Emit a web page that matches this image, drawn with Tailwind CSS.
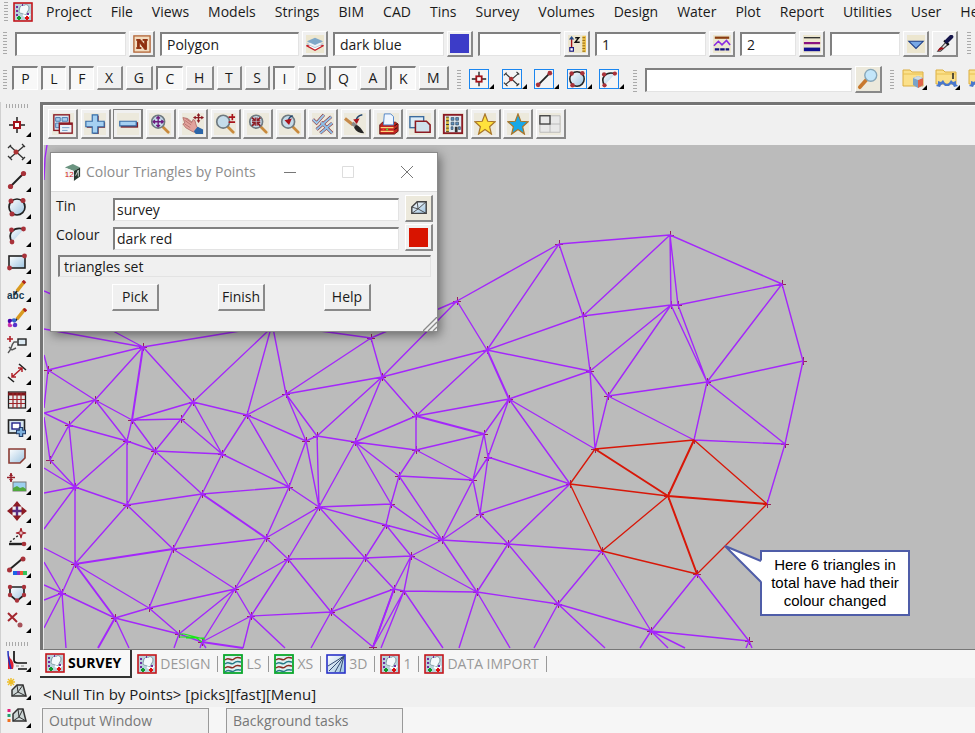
<!DOCTYPE html>
<html lang="en">
<head>
  <meta charset="UTF-8">
  <meta name="viewport" content="width=device-width, initial-scale=1">
  <title>Survey - Colour Triangles by Points</title>
  <script src="https://cdn.jsdelivr.net/npm/@tailwindcss/browser@4"></script>
</head>
<body class="flex h-screen flex-col overflow-hidden bg-[#f0f0f0] font-['Open_Sans','Noto_Sans',sans-serif] text-sm text-[#1a1a1a]">

  <!-- Gradients stay out of the hidden sprite, or they would not paint -->
  <svg class="absolute size-0" aria-hidden="true">
    <linearGradient id="sky" x1="0" y1="0" x2="1" y2="1"><stop offset="0" stop-color="#fff"/><stop offset="1" stop-color="#9cc3e0"/></linearGradient>
  </svg>

  <!-- Icon set -->
  <svg class="hidden">
    <defs>
      <g id="lens"><path d="M15 15l6 6" stroke="#c98a3c" stroke-width="3" stroke-linecap="round"/><circle cx="10" cy="9.500" r="7" fill="#c5dcea" stroke="#6f7a80" stroke-width="1.800"/></g>
    </defs>
    <symbol id="plan" viewBox="0 0 20 20"><rect x="1" y="1" width="18" height="18" fill="#b9d3dc" stroke="#c4161c" stroke-width="1.600"/><path d="M7 5c2-3 4-1 5-2s4 0 4 3-2 3-2 5-3 2-4 1-4 0-4-3z" fill="#f4f9fb" stroke="#7f9aa5"/><path d="M10 13l4 2 3-3" stroke="#fff" stroke-width="2" fill="none"/><path d="M3 5h2M3 9h2M3 13h2M9 3h1M14 12h2" stroke="#7030a0" stroke-width="2"/><path d="M6 14v4M4 16h4" stroke="#129a2c" stroke-width="2"/><path d="M14 14v4M12 16h4" stroke="#e01010" stroke-width="2"/></symbol>
    <symbol id="section" viewBox="0 0 20 20"><rect x="1" y="1" width="18" height="18" fill="#dff0f0" stroke="#0aa82c" stroke-width="1.800"/><g fill="none" stroke-width="1.500"><path d="M2 6c4-4 6 2 9-1s5-1 7-1" stroke="#8a2b20"/><path d="M2 10c4-4 6 2 9-1s5-1 7-1" stroke="#267a86"/><path d="M2 14c4-4 6 2 9-1s5-1 7-1" stroke="#8a2b20"/><path d="M2 18c4-4 6 1 9-1s5-1 7-1" stroke="#267a86"/></g></symbol>
    <symbol id="persp" viewBox="0 0 20 20"><rect x="1" y="1" width="18" height="18" fill="url(#sky)" stroke="#2a32c8" stroke-width="1.600"/><path d="M18 2L3 17M18 2L9 18M18 2L14 18M2 12L18 2" stroke="#334b74" fill="none"/></symbol>
    <symbol id="point" viewBox="0 0 20 20"><path d="M10 2v16M2 10h16" stroke="#222" stroke-width="1.500"/><rect x="7" y="7" width="6" height="6" fill="#fff" stroke="#a3121a" stroke-width="2"/></symbol>
    <symbol id="cross" viewBox="0 0 20 20"><path d="M3 4l14 13M3 16L17 4M1 6l3-3M15 2l3 3M1 14l4 4M15 18l3-3" stroke="#333" stroke-width="1.300" fill="none"/><circle cx="9" cy="10" r="2.500" fill="#a33"/></symbol>
    <symbol id="line" viewBox="0 0 20 20"><path d="M3 17L17 3" stroke="#222" stroke-width="2"/><circle cx="3.500" cy="16.500" r="2.600" fill="#a8323a"/><circle cx="16.500" cy="3.500" r="2.600" fill="#a8323a"/></symbol>
    <symbol id="circle" viewBox="0 0 20 20"><circle cx="10" cy="10" r="8" fill="url(#sky)" stroke="#222" stroke-width="1.700"/><g fill="#a8323a"><circle cx="4" cy="4" r="2.500"/><circle cx="16" cy="3.500" r="2.500"/><circle cx="5" cy="17" r="2.500"/></g></symbol>
    <symbol id="arc" viewBox="0 0 20 20"><path d="M5 17C0 9 6 1 17 4z" fill="url(#sky)"/><path d="M5 17C0 9 6 1 17 4" fill="none" stroke="#222" stroke-width="1.700"/><g fill="#a8323a"><circle cx="4.500" cy="5" r="2.400"/><circle cx="16.500" cy="4" r="2.400"/><circle cx="5" cy="17" r="2.400"/></g></symbol>
    <symbol id="rect" viewBox="0 0 20 20"><rect x="2" y="4" width="16" height="12" fill="url(#sky)" stroke="#222" stroke-width="1.600"/><circle cx="2.500" cy="16" r="2.400" fill="#a8323a"/><circle cx="17.500" cy="4" r="2.400" fill="#a8323a"/></symbol>
    <symbol id="text" viewBox="0 0 20 20"><path d="M17 2l-7 9" stroke="#d99a20" stroke-width="3.500"/><path d="M18 1l-2 2" stroke="#a22" stroke-width="3.500"/><path d="M10 11l-3 4" stroke="#222" stroke-width="2"/><text x="0" y="19" font-size="10" font-weight="700" fill="#163a50" font-family="Liberation Sans">abc</text></symbol>
    <symbol id="paint" viewBox="0 0 20 20"><path d="M18 1l-8 10" stroke="#d99a20" stroke-width="3.500"/><path d="M19 1l-2 2" stroke="#a22" stroke-width="3.500"/><path d="M10 11l-2 2" stroke="#222" stroke-width="2"/><circle cx="3" cy="13" r="2.300" fill="#40a"/><circle cx="7" cy="12.500" r="2.300" fill="#36c"/><circle cx="3" cy="17" r="2.300" fill="#c3a"/><circle cx="8" cy="17" r="2.300" fill="#53c"/><circle cx="5" cy="15" r="1.500" fill="#fff"/></symbol>
    <symbol id="leader" viewBox="0 0 20 20"><path d="M3 1v6M0 4h6" stroke="#b02028" stroke-width="1.600"/><rect x="11" y="4" width="8" height="6" fill="#dceaf3" stroke="#222" stroke-width="1.400"/><path d="M11 7H7c-3 3-2 7-6 11M2 12l3 3 4-2" stroke="#555" fill="none" stroke-width="1.400"/></symbol>
    <symbol id="dim" viewBox="0 0 20 20"><path d="M1 14l6 5M12 1l7 6" stroke="#222" stroke-width="1.600"/><path d="M5 14l10-9M5 10v4h4M11 5h4v4" stroke="#b02028" stroke-width="1.500" fill="none"/></symbol>
    <symbol id="grid" viewBox="0 0 20 20"><rect x="1.500" y="2" width="17" height="16" fill="#e6e9ea" stroke="#222" stroke-width="1.300"/><path d="M1 4h18" stroke="#7c1519" stroke-width="3"/><path d="M2 9.500h16M2 13.500h16M6 3v15M10 3v15M14 3v15" stroke="#9d2328" stroke-width="1.200"/></symbol>
    <symbol id="viewadd" viewBox="0 0 20 20"><rect x="1.500" y="2" width="16" height="13" fill="#d7e6ef" stroke="#222" stroke-width="1.600"/><rect x="5" y="5" width="8" height="6" fill="#fff" stroke="#228" stroke-width="1.400"/><path d="M14 9v10M9 14h10" stroke="#223a66" stroke-width="4.500"/><path d="M14 10v8M10 14h8" stroke="#7db0dd" stroke-width="2.300"/></symbol>
    <symbol id="poly" viewBox="0 0 20 20"><path d="M2 3h16v9l-5 5H2z" fill="url(#sky)" stroke="#8a3b33" stroke-width="1.600"/></symbol>
    <symbol id="image" viewBox="0 0 20 20"><path d="M4 0v9M0 4.500h8" stroke="#96202a" stroke-width="1.500"/><path d="M4 0l2 3H2zM4 9l2-3H2z" fill="#96202a"/><rect x="6" y="9" width="13" height="9" fill="#9cd0ee" stroke="#777"/><path d="M6 18v-3l4-2 3 2 3-1 3 2v2z" fill="#4fa83c"/></symbol>
    <symbol id="move" viewBox="0 0 20 20"><path d="M10 3v14M3 10h14" stroke="#5b2d82" stroke-width="2.400"/><path d="M10 0l4.500 5.500h-9zM10 20l4.500-5.500h-9zM0 10l5.500-4.500v9zM20 10l-5.500-4.500v9z" fill="#8d1c24"/></symbol>
    <symbol id="offset" viewBox="0 0 20 20"><path d="M2 16h15" stroke="#222" stroke-width="2.400"/><path d="M3 14L13 6" stroke="#222" stroke-dasharray="2 2" stroke-width="1.500"/><path d="M14 0l1 4 4 1-4 1-1 4-1-4-4-1 4-1z" fill="#fff" stroke="#a1202a" stroke-width="1.200"/><circle cx="17" cy="16" r="2.300" fill="#a8323a"/></symbol>
    <symbol id="recolour" viewBox="0 0 20 20"><path d="M2 14L15 3" stroke="#222" stroke-width="2"/><circle cx="16" cy="3" r="2.500" fill="#a8323a"/><circle cx="2.500" cy="14" r="2.500" fill="#a8323a"/><path d="M6 17h4" stroke="#1b62e8" stroke-width="4"/><path d="M10 17h3" stroke="#8a30c0" stroke-width="4"/><path d="M13 17h3" stroke="#ef5a32" stroke-width="4"/><path d="M16 17h4" stroke="#35c45a" stroke-width="4"/></symbol>
    <symbol id="shield" viewBox="0 0 20 20"><path d="M3 4h14v8l-7 6-7-6z" fill="url(#sky)" stroke="#222" stroke-width="1.700"/><g fill="#a8323a"><circle cx="3" cy="4" r="2.200"/><circle cx="17" cy="4" r="2.200"/><circle cx="3" cy="12" r="2.200"/><circle cx="17" cy="12" r="2.200"/><circle cx="10" cy="17.500" r="2.200"/></g></symbol>
    <symbol id="delpt" viewBox="0 0 20 20"><path d="M1 2l9 9M10 2l-9 8" stroke="#a3262e" stroke-width="2"/><circle cx="13" cy="14" r="2.500" fill="#a8525a"/></symbol>
    <symbol id="road" viewBox="0 0 20 20"><path d="M1 3v16h5q2-7-3-11z" fill="#e02030"/><path d="M1 1q0 8 3 18" stroke="#2030c0" stroke-width="1.500" fill="none"/><path d="M7 1v9q0 3 4 3h9M11 19h9" stroke="#111" stroke-width="1.700" fill="none"/><path d="M9 16h10" stroke="#888" stroke-dasharray="3 2"/></symbol>
    <symbol id="tin" viewBox="0 0 20 20"><path d="M2 16V9l6-6h10v13z" fill="url(#sky)" stroke="#444" stroke-width="1.600"/><path d="M2 16l7-5 9-8M8 3l1 8 9 5M2 9l7 2" stroke="#444" fill="none"/></symbol>
    <symbol id="tinnew" viewBox="0 0 20 20"><path d="M4 0v8M0 4h8M1 1l6 6M7 1L1 7" stroke="#edbd28" stroke-width="1.400"/><path d="M5 18v-6l5-5h6l3 11z" fill="#cdd6d6" stroke="#333" stroke-width="1.500"/><path d="M5 18l6-4 5-7M10 7l1 7 8 4" stroke="#333" fill="none"/></symbol>
    <symbol id="tincol" viewBox="0 0 20 20"><path d="M2 3v3" stroke="#e0207a" stroke-width="3"/><path d="M2 8v3" stroke="#20a070" stroke-width="3"/><path d="M2 13v3" stroke="#f07020" stroke-width="3"/><path d="M6 15V8l5-5h5l3 12z" fill="#cdd6d6" stroke="#333" stroke-width="1.500"/><path d="M6 15l6-4 4-8M11 3l1 8 7 4" stroke="#333" fill="none"/></symbol>

    <symbol id="menu" viewBox="0 0 24 24"><rect x="2" y="2" width="17" height="17" fill="#d6e8f5" stroke="#8c1a22" stroke-width="1.500"/><path d="M4 5h5v4H4zM11 5h6v4h-6zM4 11h4v5H4z" fill="#a9cdec" stroke="#4576ad"/><rect x="8" y="11" width="14" height="11" fill="#eaf3fa" stroke="#8c1a22" stroke-width="1.500"/><path d="M8 12h14" stroke="#8c1a22" stroke-width="2"/><path d="M11 16h8M11 19h6" stroke="#6f9cc8"/></symbol>
    <symbol id="plus" viewBox="0 0 24 24"><path d="M10 3h6v7h7v6h-7v7h-6v-7H3v-6h7z" fill="#7d1f28"/><path d="M9 2h6v7h7v6h-7v7H9v-7H2V9h7z" fill="#a5d0f2" stroke="#396ea8" stroke-width="1.300"/></symbol>
    <symbol id="minus" viewBox="0 0 24 24"><path d="M4 10h19v6H4z" fill="#7d1f28"/><path d="M3 9h18v5H3z" fill="#a5d0f2" stroke="#396ea8" stroke-width="1.300"/></symbol>
    <symbol id="zfit" viewBox="0 0 24 24"><use href="#lens"/><path d="M10 4v11M4.500 9.500h11M8 6l2-2 2 2M8 13l2 2 2-2M6.500 7.500l-2 2 2 2M13.500 7.500l2 2-2 2" stroke="#6d1b7e" stroke-width="1.500" fill="none"/></symbol>
    <symbol id="hand" viewBox="0 0 24 24"><path d="M1 5l5 1 5 4 1-3 2 1 2 7 3 2-3 5-5-2-7-4-3-4 2-1z" fill="#e2a29c" stroke="#a8625e" stroke-width=".800"/><path d="M3 8l7 5M4 6l7 5M3 12l6 4" stroke="#b8736e"/><path d="M17 15l6 3v5h-8l-2-3z" fill="#2c65a8"/><path d="M18 1v8M14 5h8" stroke="#8c1a22" stroke-width="1.500"/><path d="M18 0l2 3h-4zM18 11l2-3h-4zM12 5l3-2v4zM24 5l-3-2v4z" fill="#8c1a22"/></symbol>
    <symbol id="zpm" viewBox="0 0 24 24"><use href="#lens"/><path d="M20 1v7M16 4.500h7M16 10h7" stroke="#a8141c" stroke-width="1.800"/></symbol>
    <symbol id="zin" viewBox="0 0 24 24"><use href="#lens"/><path d="M5.500 5l3 3M14.500 5l-3 3M5.500 14l3-3M14.500 14l-3-3" stroke="#8c1a22" stroke-width="2"/><path d="M9 5v3.500H5.500M11 5v3.500h3.500M9 14v-3.500H5.500M11 14v-3.500h3.500" stroke="#8c1a22" stroke-width="1.300" fill="none"/></symbol>
    <symbol id="zprev" viewBox="0 0 24 24"><use href="#lens"/><path d="M15 3C11 4 10 6 10 11" stroke="#24466e" stroke-width="1.800" fill="none"/><path d="M6 8l8-2-3 7z" fill="#a8141c"/></symbol>
    <symbol id="ticks" viewBox="0 0 24 24"><g fill="none"><path d="M1 7l4 4 8-9" stroke="#8c3038" stroke-width="3.400"/><path d="M1 7l4 4 8-9" stroke="#9ccbee" stroke-width="2.200"/><path d="M10 10l12 12M22 11L9 22M5 18L21 4" stroke="#8c3038" stroke-width="3.400"/><path d="M10 10l12 12M22 11L9 22M5 18L21 4" stroke="#8fc0e8" stroke-width="2.200"/></g></symbol>
    <symbol id="brush" viewBox="0 0 24 24"><path d="M1 6l9 7" stroke="#c68a4a" stroke-width="3.500"/><path d="M9 11l5 4" stroke="#888" stroke-width="4"/><path d="M13 13c4 1 6 4 9 9-5 0-9-2-11-6z" fill="#252525"/><path d="M20 2c-5 1-7 3-7 8" stroke="#24466e" stroke-width="1.600" fill="none"/><path d="M10 7l7-1-3 6z" fill="#a8141c"/></symbol>
    <symbol id="print" viewBox="0 0 24 24"><path d="M3 13l3-3h14l3 2v8l-4 3H3z" fill="#c22520" stroke="#641010"/><path d="M8 1h7l3 3v9H7z" fill="#eff6ff" stroke="#4980c8"/><path d="M4 16h14M4 20h14" stroke="#ffd27a" stroke-width="1.500"/><path d="M19 14l3-2M19 18l3-2" stroke="#111"/><circle cx="7" cy="18" r="1" fill="#f33"/><circle cx="11" cy="18" r="1" fill="#3f3"/></symbol>
    <symbol id="sheets" viewBox="0 0 24 24"><rect x="1" y="4" width="15" height="12" fill="#dcecf7" stroke="#3b6b9e" stroke-width="1.500"/><path d="M7 9h12l4 4v8H7z" fill="#cfe0ec" stroke="#8c1a22" stroke-width="1.700"/></symbol>
    <symbol id="building" viewBox="0 0 24 24"><rect x="2" y="2" width="20" height="20" fill="#dfeaf2" stroke="#8c1a22" stroke-width="2"/><path d="M6 4v17" stroke="#d8b93a" stroke-width="3"/><path d="M6 4v17" stroke="#333" stroke-width="3" stroke-dasharray="1 3"/><path d="M10 5h3v3h-3zM15 5h3v3h-3zM10 10h3v3h-3zM15 10h3v3h-3zM10 15h2v3h-2zM18 15h2v3h-2z" fill="#5b93c6" stroke="#345" stroke-width=".700"/><path d="M14 15h3v6h-3z" fill="#333"/></symbol>
    <symbol id="star" viewBox="0 0 24 24"><path d="M12 1l3 8 8 .5-6 5.500 2 8-7-5-7 5 2-8-6-5.500L9 9z" fill="currentColor" stroke="#a8752a" stroke-width="1.300"/></symbol>
    <symbol id="quad" viewBox="0 0 24 24"><path d="M1 3h22v18H1zM12 3v18M1 12h22" fill="#e8e8e8" stroke="#b8b8b8"/><rect x="1" y="3" width="11" height="9" fill="#e8e8e8" stroke="#444" stroke-width="1.500"/></symbol>

    <symbol id="named" viewBox="0 0 20 20"><rect x="1" y="1" width="18" height="18" fill="#f2dcc0" stroke="#b4683a" stroke-width="1.500"/><path d="M4 5h4l5 6V6h-2V5h5v1h-1v10h-2L7 8v6h2v1H4v-1h1V6H4z" fill="#8e2f10" stroke="#8e2f10"/></symbol>
    <symbol id="layers" viewBox="0 0 20 20"><rect width="20" height="20" fill="#ece6cf"/><path d="M1 12l9 5 9-5-9-4z" fill="#fff" stroke="#c4202a" stroke-width="1.500"/><path d="M1 10l9 4 9-4-9-5z" fill="#eef3f7" stroke="#b5c5d0"/><path d="M1 7l9 4 9-4-9-4z" fill="#7fa8c8"/></symbol>
    <symbol id="zval" viewBox="0 0 20 20"><rect width="20" height="20" fill="#ece6cf"/><path d="M4 14V4" stroke="#a3121a" stroke-width="1.500"/><path d="M4 1l3 4H1z" fill="#224a88"/><rect x="2" y="14" width="4" height="4" fill="#fff" stroke="#1a1a80" stroke-width="1.300"/><path d="M8 3h4L8 8h5" stroke="#111" stroke-width="1.600" fill="none"/><path d="M16 1h4v18h-4z" fill="#efc44e"/><path d="M16 3h3M16 6h3M16 9h3M16 12h3M16 15h3M16 18h3" stroke="#8a6212"/></symbol>
    <symbol id="style" viewBox="0 0 20 20"><rect width="20" height="20" fill="#ece6cf"/><path d="M2 3h16" stroke="#8a3d10" stroke-width="2.500"/><path d="M1 12l5-5 4 4 5-5 4 5" stroke="#8a2be2" stroke-width="1.800" fill="none"/><path d="M2 16h16" stroke="#101080" stroke-width="2.500" stroke-dasharray="5 1"/></symbol>
    <symbol id="weight" viewBox="0 0 20 20"><rect width="20" height="20" fill="#ece6cf"/><path d="M1 3h18" stroke="#333" stroke-width="1.500"/><path d="M1 9h18" stroke="#8a1280" stroke-width="2.500"/><path d="M1 16h18" stroke="#101090" stroke-width="4"/></symbol>
    <symbol id="down" viewBox="0 0 20 20"><rect width="20" height="20" fill="#ece6cf"/><path d="M2 7h16l-8 8z" fill="#78a8e6" stroke="#1e3f88" stroke-width="1.200"/></symbol>
    <symbol id="dropper" viewBox="0 0 20 20"><path d="M2 18l9-10 3 2-9 8z" fill="#e6e2e2" stroke="#444" stroke-width="1.200"/><path d="M2 18c1-4 4-6 7-3z" fill="#a3121a"/><path d="M9 6l5 5" stroke="#111" stroke-width="2.400"/><path d="M12 7l5-5" stroke="#15154a" stroke-width="4.500" stroke-linecap="round"/></symbol>
    <symbol id="search" viewBox="0 0 24 24"><path d="M3 21l8-9" stroke="#c8782c" stroke-width="4" stroke-linecap="round"/><circle cx="15" cy="8" r="6.500" fill="#c3e6fa" stroke="#86a6b8" stroke-width="1.500"/></symbol>
    <symbol id="folderbox" viewBox="0 0 24 24"><path d="M1 4h7l2 2h11v14H1z" fill="#fbe08a" stroke="#dcae40"/><path d="M1 8h20" stroke="#e8c050"/><path d="M11 12l5-2 5 2v7l-5 3-5-3z" fill="#7aa3c8"/><path d="M16 14l5-2v7l-5 3z" fill="#e0644a"/><path d="M11 12l5-2 5 2-5 2z" fill="#cfdbe5"/></symbol>
    <symbol id="foldergear" viewBox="0 0 24 24"><path d="M1 4h7l2 2h11v12H1z" fill="#fbe08a" stroke="#dcae40"/><path d="M1 8h20" stroke="#e8c050"/><path d="M18 7v6" stroke="#222" stroke-width="1.500"/><path d="M1 20l2-2 0-3 3 1 2-2 2 3 2 1 2-1 2-3 2 2 3-1v3l2 2-4 1-1-2-2-1-2 2h-4l-2-2-2 1-1 2z" fill="#4a78cc"/></symbol>
    <symbol id="cube" viewBox="0 0 20 20"><path d="M2 5l9-4 8 4-7 4z" fill="#6b9480"/><path d="M12 9l7-4v10l-7 5z" fill="#26362e"/><path d="M2 5l10 4v11L2 15z" fill="#f6f6f6"/><path d="M14 14l3-6v7" stroke="#dfe8e3" fill="none"/><text x="2" y="15" font-size="9" fill="#d01818" font-family="Liberation Sans">12</text></symbol>
  </svg>

  <nav class="flex h-6 flex-none items-center gap-[13px] overflow-hidden pl-1 whitespace-nowrap">
    <span class="h-5 w-1 flex-none bg-[repeating-linear-gradient(#aaa_0_1px,#f0f0f0_1px_3px)]"></span>
    <svg class="-mr-1 -ml-2 size-5 flex-none"><use href="#plan"/></svg>
    <div id="menus" class="flex gap-[19px] pl-1"></div>
  </nav>

  <!-- Attribute toolbar -->
  <div class="flex h-10 flex-none items-center gap-[5px] overflow-hidden pl-[3px]">
    <span class="mr-[3px] h-6 w-1 flex-none bg-[repeating-linear-gradient(#aaa_0_1px,#f0f0f0_1px_3px)]"></span>
    <div id="attrs" class="flex gap-[5px]"></div>
    <span class="ml-1 h-6 w-1 flex-none bg-[repeating-linear-gradient(#aaa_0_1px,#f0f0f0_1px_3px)]"></span>
  </div>

  <!-- Snap toolbar -->
  <div class="flex h-[38px] flex-none items-start overflow-hidden pt-[2px] pl-[3px]">
    <span class="mt-1 mr-[5px] h-5 w-1 flex-none bg-[repeating-linear-gradient(#aaa_0_1px,#f0f0f0_1px_3px)]"></span>
    <div id="snaps" class="flex w-[437px] flex-none gap-[3px]"></div>
    <span class="mt-1 mr-2 ml-2 h-5 w-1 flex-none bg-[repeating-linear-gradient(#aaa_0_1px,#f0f0f0_1px_3px)]"></span>
    <div id="filters" class="mr-[5px] flex w-[155px] flex-none justify-between pt-[3px]"></div>
    <span class="mt-1 mr-2 ml-1 h-6 w-1 flex-none bg-[repeating-linear-gradient(#aaa_0_1px,#f0f0f0_1px_3px)]"></span>
    <div class="flex flex-none gap-[3px]">
      <input type="text" aria-label="Search" class="mt-[2px] h-6 w-[207px] border-t-2 border-l-2 border-r border-b border-t-[#808080] border-r-[#e3e3e3] border-b-[#e3e3e3] border-l-[#808080] bg-white px-1">
      <button aria-label="Find" class="flex size-[27px] items-center justify-center border-t border-l border-r-2 border-b-2 border-t-white border-r-[#898989] border-b-[#898989] border-l-white bg-[#ece9dc]"><svg class="size-[22px]"><use href="#search"/></svg></button>
    </div>
    <span class="mt-1 mr-2 ml-2 h-5 w-1 flex-none bg-[repeating-linear-gradient(#aaa_0_1px,#f0f0f0_1px_3px)]"></span>
    <div id="folders" class="flex flex-none gap-2"></div>
  </div>

  <div class="flex min-h-0 flex-1">
    <!-- Drawing tools -->
    <aside class="w-10 flex-none overflow-hidden border-l border-[#d0d0d0] pt-[2px]">
      <div class="ml-[5px] h-1 w-6 bg-[repeating-linear-gradient(90deg,#aaa_0_1px,#f0f0f0_1px_3px)]"></div>
      <div id="tools" class="mt-[3px] grid h-[524px] grid-rows-19"></div>
      <div class="mt-[7px] ml-[5px] h-1 w-6 bg-[repeating-linear-gradient(90deg,#aaa_0_1px,#f0f0f0_1px_3px)]"></div>
      <div id="tinTools" class="grid h-[84px] grid-rows-3"></div>
    </aside>

    <main class="flex min-w-0 flex-1 flex-col">
      <section class="flex min-h-0 flex-1 flex-col border-t-[3px] border-l-[3px] border-[#747474]">
        <div class="h-10 flex-none overflow-hidden border-t border-l border-white bg-[#f0f0f0] pt-[3px] pl-1">
          <div id="viewTools" class="flex w-[518px] justify-between"></div>
        </div>

        <div class="relative min-h-0 flex-1 overflow-hidden border-b border-l border-b-[#777] border-l-[#e8e8e8] bg-[#bbbbbb]">
          <svg class="absolute top-0 left-0 h-[504px] w-[931px]" viewBox="44 145 931 504" fill="none">
            <path id="marks" stroke="#98205c" stroke-width="1"/>
            <path id="mesh" stroke="#a427fb" stroke-width="1.400"/>
            <path id="bold" stroke="#a427fb" stroke-width="2"/>
            <path id="changed" stroke="#d81708" stroke-width="1.300"/>
            <path id="changedBold" stroke="#d81708" stroke-width="2"/>
            <path d="M179 634h5l20 5M179 637l16 0 7 5M186 638h18v2" stroke="#18e818" stroke-width="1.200"/>
          </svg>

          <!-- Callout -->
          <p class="absolute top-[405px] left-[716px] w-[150px] border-2 border-[#4f5da8] bg-white py-1 text-center font-['Liberation_Sans',sans-serif] text-[15px] leading-[18px] text-black">Here 6 triangles in<br>total have had their<br>colour changed</p>
          <svg class="absolute top-[396px] left-[676px] h-[48px] w-[44px]" viewBox="720 541 44 48"><path d="M763 561L725 546l38 37z" fill="#fff"/><path d="M761 561L725 546l36 36" fill="none" stroke="#4f5da8" stroke-width="2"/></svg>

          <!-- Dialog -->
          <form class="absolute top-[7px] left-[6px] w-[388px] border border-[#8a8a8a] bg-[#f0f0f0] shadow-[2px_3px_10px_rgba(0,0,0,0.45)]" onsubmit="return false">
            <header class="flex h-[39px] items-center border-b border-[#dcdcdc] bg-white pl-3">
              <svg class="size-[18px]"><use href="#cube"/></svg>
              <h1 class="flex-1 pl-[5px] text-sm whitespace-nowrap text-[#8c8c8c]">Colour Triangles by Points</h1>
              <button type="button" aria-label="Minimise" class="flex w-[58px] justify-center"><svg class="size-4" viewBox="0 0 16 16"><path d="M2 8.500h12" stroke="#777"/></svg></button>
              <button type="button" aria-label="Maximise" class="flex w-[58px] justify-center"><svg class="size-4" viewBox="0 0 16 16"><path d="M2.500 2.500h11v11h-11z" fill="none" stroke="#ddd"/></svg></button>
              <button type="button" aria-label="Close" class="flex w-[60px] justify-center"><svg class="size-4" viewBox="0 0 16 16"><path d="M2 2l12 12M14 2L2 14" stroke="#777"/></svg></button>
            </header>
            <div class="grid grid-cols-[54px_1fr_28px] items-center gap-x-[3px] gap-y-[2px] pt-[3px] pr-1 pl-[5px]">
              <label for="tin" class="self-start leading-[22px]">Tin</label>
              <input id="tin" type="text" value="survey" class="mt-px mr-[3px] h-[23px] min-w-0 border-t-2 border-l-2 border-r border-b border-t-[#808080] border-r-[#e3e3e3] border-b-[#e3e3e3] border-l-[#808080] bg-white px-0.5">
              <button type="button" aria-label="Choose tin" class="flex h-[27px] items-center justify-center border-t border-l border-r-2 border-b-2 border-t-white border-r-[#898989] border-b-[#898989] border-l-white bg-[#ece9dc]"><svg class="size-[18px]"><use href="#tin"/></svg></button>
              <label for="colour" class="self-start leading-[22px]">Colour</label>
              <input id="colour" type="text" value="dark red" class="mt-px mr-[3px] h-[23px] min-w-0 border-t-2 border-l-2 border-r border-b border-t-[#808080] border-r-[#e3e3e3] border-b-[#e3e3e3] border-l-[#808080] bg-white px-0.5">
              <button type="button" aria-label="Choose colour" class="flex h-[27px] items-center justify-center border-t border-l border-r-2 border-b-2 border-t-white border-r-[#898989] border-b-[#898989] border-l-white"><span class="size-[19px] bg-[#d81400]"></span></button>
            </div>
            <output class="mr-1.5 ml-[7px] mt-1 block h-[22px] border-t-2 border-l-2 border-r border-b border-t-[#808080] border-r-[#e3e3e3] border-b-[#e3e3e3] border-l-[#808080] pl-1 leading-5">triangles set</output>
            <div class="mt-[7px] flex justify-between pr-[66px] pb-5 pl-[61px]">
              <button type="button" class="h-[27px] w-[47px] border-t border-l border-r-2 border-b-2 border-t-white border-r-[#898989] border-b-[#898989] border-l-white">Pick</button>
              <button type="button" class="h-[27px] w-[47px] border-t border-l border-r-2 border-b-2 border-t-white border-r-[#898989] border-b-[#898989] border-l-white">Finish</button>
              <button type="button" class="h-[27px] w-[47px] border-t border-l border-r-2 border-b-2 border-t-white border-r-[#898989] border-b-[#898989] border-l-white">Help</button>
            </div>
            <svg class="absolute right-0 bottom-0 size-[14px]" viewBox="0 0 14 14"><path d="M0 14L14 0M5 14l9-9M10 14l4-4" stroke="#888" stroke-width="1.300"/></svg>
          </form>
        </div>
      </section>

      <div id="tabs" class="flex h-7 flex-none items-stretch bg-[#f6f6f6] whitespace-nowrap text-[#999]"></div>
      <p class="h-[29px] flex-none pl-[3px] text-[15px] leading-[32px]">&lt;Null Tin by Points&gt; [picks][fast][Menu]</p>
      <div class="flex h-[26px] flex-none items-end gap-[17px] bg-[#f6f6f6] pl-[2px] text-[#777]">
        <button class="h-[25px] w-[167px] border border-b-0 border-[#999] bg-[#f0f0f0] pl-1.5 text-left">Output Window</button>
        <button class="h-[25px] w-[177px] border border-b-0 border-[#999] bg-[#f0f0f0] pl-1.5 text-left">Background tasks</button>
      </div>
    </main>
  </div>

  <script>
    const fill = (id, items, tpl) => {
      document.getElementById(id).innerHTML = items.map(tpl).join('');
    };

    fill('menus', ['Project', 'File', 'Views', 'Models', 'Strings', 'BIM', 'CAD', 'Tins', 'Survey', 'Volumes', 'Design', 'Water', 'Plot', 'Report', 'Utilities', 'User', 'Help'],
      m => `<a href="#" class="hover:underline">${m}</a>`);

    // label, width, value, button icons
    const attrs = [
      ['Name', 111, '', ['named']],
      ['Model', 139, 'Polygon', ['layers']],
      ['Colour', 111, 'dark blue', ['']],
      ['Height', 83, '', ['zval']],
      ['Line style', 111, '1', ['style']],
      ['Weight', 56, '2', ['weight']],
      ['Tinable', 70, '', ['down', 'dropper']]
    ];
    fill('attrs', attrs, ([label, w, value, icons]) => `
      <div class="flex flex-none items-center gap-[3px]">
        <input type="text" aria-label="${label}" value="${value}" style="width:${w}px" class="h-6 border-t-2 border-l-2 border-r border-b border-t-[#808080] border-r-[#e3e3e3] border-b-[#e3e3e3] border-l-[#808080] bg-white px-[5px]">
        ${icons.map(i => `<button aria-label="Pick ${label}" class="flex size-[26px] items-center justify-center border-t border-l border-r-2 border-b-2 border-t-white border-r-[#898989] border-b-[#898989] border-l-white">${i ? `<svg class="size-[18px]"><use href="#${i}"/></svg>` : '<span class="size-[19px] bg-[#3c3cc8]"></span>'}</button>`).join('')}
      </div>`);

    const pressed = 'PLFCIQK';
    fill('snaps', [...'PLFXGCHTSIDQAKM'], s => pressed.includes(s)
      ? `<button aria-pressed="true" class="h-6 flex-auto border-t-2 border-l-2 border-r border-b border-t-[#808080] border-r-white border-b-white border-l-[#808080] bg-[#f8f8f8] px-[7px]">${s}</button>`
      : `<button aria-pressed="false" class="h-6 flex-auto border-t border-l border-r-2 border-b-2 border-t-white border-r-[#898989] border-b-[#898989] border-l-white px-[7px]">${s}</button>`);

    const corner = '<svg class="size-[5px] flex-none" viewBox="0 0 5 5"><path d="M5 0v5H0z"/></svg>';
    fill('filters', ['point', 'cross', 'line', 'circle', 'arc'], i => `
      <button aria-label="Snap ${i}" class="flex items-end">
        <span class="border border-[#1a86f0] bg-[#f4f4f4]"><svg class="size-[18px]"><use href="#${i}"/></svg></span>${corner}
      </button>`);
    fill('folders', ['folderbox', 'foldergear', 'foldergear'], i => `
      <button aria-label="${i}" class="flex items-end"><svg class="-mr-1 size-6"><use href="#${i}"/></svg>${corner}</button>`);

    const tool = i => `
      <button aria-label="${i}" class="flex items-end pl-1.5"><svg class="mb-1 size-5"><use href="#${i}"/></svg><svg class="-ml-px mb-[2px] size-[5px] flex-none" viewBox="0 0 5 5"><path d="M5 0v5H0z"/></svg></button>`;
    fill('tools', ['point', 'cross', 'line', 'circle', 'arc', 'rect', 'text', 'paint', 'leader', 'dim', 'grid', 'viewadd', 'poly', 'image', 'move', 'offset', 'recolour', 'shield', 'delpt'], tool);
    fill('tinTools', ['road', 'tinnew', 'tincol'], tool);

    fill('viewTools', ['menu', 'plus', 'minus', 'zfit', 'hand', 'zpm', 'zin', 'zprev', 'ticks', 'brush', 'print', 'sheets', 'building', 'star', 'star', 'quad'], (i, n) => `
      <button aria-label="${i}" class="flex h-[30px] w-[30px] flex-none items-center justify-center border-t border-l border-r-2 border-b-2 ${i === 'minus' ? 'border-[#808080]' : 'border-t-white border-r-[#898989] border-b-[#898989] border-l-white'} ${n === 14 ? 'text-[#18a8e8]' : 'text-[#ffe23c]'}"><span class="bg-[#ece9dc]"><svg class="size-[22px]"><use href="#${i}"/></svg></span></button>`);

    fill('tabs', [['plan', 'SURVEY'], ['plan', 'DESIGN'], ['section', 'LS'], ['section', 'XS'], ['persp', '3D'], ['plan', '1'], ['plan', 'DATA IMPORT']], ([icon, name], n) => n === 0
      ? `<button class="flex items-center gap-[3px] border-r-2 border-b-2 border-[#333] bg-[#f8f8f8] pr-[9px] pl-[5px] font-bold text-black"><svg class="size-5"><use href="#${icon}"/></svg>${name}</button>`
      : `<button class="flex items-center gap-[3px] pl-[5px]"><svg class="size-5"><use href="#${icon}"/></svg>${name}<span class="ml-1 h-4 w-px bg-[#999]"></span></button>`);

    // Tin vertices
    const P = {
      a1: [143, 347], a2: [48, 370], a3: [95, 400], a4: [69, 425], a5: [50, 460], a6: [75, 487], a7: [132, 420], a8: [193, 402],
      a9: [181, 419], a10: [127, 441], a11: [155, 451], a12: [222, 454], a13: [247, 415], a14: [286, 394], a15: [306, 441],
      a16: [317, 436], a17: [289, 487], a18: [202, 494], a19: [127, 505], a20: [319, 507], a21: [266, 538], a22: [173, 549],
      a23: [288, 559], a24: [75, 564], a25: [62, 593], a26: [235, 589], a27: [149, 608], a28: [115, 618], a29: [251, 616],
      a30: [331, 612], a31: [179, 634], a32: [202, 642],
      b1: [371, 338], b2: [457, 301], b3: [559, 244], b4: [487, 350], b5: [382, 377], b6: [583, 316], b7: [590, 371],
      b8: [509, 399], b9: [416, 416], b10: [355, 442], b11: [416, 450], b12: [484, 434], b13: [488, 457], b14: [399, 476],
      b15: [473, 480], b16: [391, 504], b17: [480, 514], b18: [570, 484], b19: [386, 525], b20: [442, 540], b21: [508, 544],
      b22: [365, 558], b23: [411, 556], b24: [394, 589], b25: [404, 591], b26: [477, 592], b27: [558, 604], b28: [373, 647],
      c1: [670, 235], c2: [782, 284], c3: [671, 305], c4: [678, 305], c5: [803, 361], c6: [707, 382], c7: [608, 396],
      c8: [595, 449], c9: [694, 440], c10: [785, 444], c11: [767, 504], c12: [668, 496], c13: [602, 551], c14: [697, 574],
      c15: [651, 631], c16: [749, 641]
    };
    const at = k => P[k] || k.split(',').map(Number);
    // "from to to to" fans, an unnamed end is an "x,y" pair
    const draw = (id, fans) => {
      document.getElementById(id).setAttribute('d', fans.map(f => {
        const [from, ...to] = f.split(' ');
        return to.map(t => `M${at(from)}L${at(t)}`).join('');
      }).join(''));
    };

    draw('mesh', [
      '47,145 45,158', '45,158 44,180', '44,291 60,298',
      'a1 a2 a3 a8 44,329 113,331 240,331', 'a2 a3 44,355 44,408', 'a3 44,413 a4 a7 a10', 'a4 44,413 a10 a5 a6',
      'a5 a6 44,417', 'a6 44,468 44,493 44,529 a10 a19 a24', 'a7 a8 a9 a10 a11', 'a8 a9 a12 a13 268,331', 'a9 a11 a12',
      'a10 a11 a19', 'a11 a12 a18 a19', 'a12 a13 a17 a18', 'a13 271,328 a14 a15 a17', 'a14 273,328 a15 a16 b1 b5',
      'a15 a16 a17 a20', 'a16 a20 b5 b10', 'a17 a18 a20 a21', 'a18 a19 a22', 'a19 a22 a24', 'a20 a21 a23 b10 b16 b19 b22',
      'a21 a22 a23 a26', 'a22 a26 a27', 'a23 a26 a29 a30 b22', 'a24 44,548 a25 a27', 'a25 44,562 44,585 44,600 44,628 66,648 a28',
      'a26 a27 a29 a31 a32', 'a27 a28 a31', 'a28 a31 129,648', 'a29 a30 a32 243,648 285,648', 'a30 b22 b24 b28 311,648',
      'a31 174,648 a32', 'a32 200,648 206,648',
      'b1 b2 b5 313,330', 'b2 b3 b4 b5', 'b3 b4 b6 c1', 'b4 b5 b6 b7 b9', 'b5 b9 b10', 'b6 b7 c1 c3', 'b7 b8 c3 c7 c8',
      'b8 b9 b12 b13 b18 c8', 'b9 b10 b11', 'b10 b11 b14 b16', 'b11 b12 b14 b15', 'b12 b13 b15', 'b13 b15 b17 b18',
      'b14 b15 b16 b20', 'b15 b17 b20', 'b16 b19 b20', 'b17 b18 b20 b21', 'b18 b21', 'b19 b20 b22 b23', 'b20 b21 b23 b26',
      'b21 b26 b27 c13', 'b22 b23 b24', 'b23 b24 b25 b26', 'b24 b25 b28', 'b25 b26 b28 381,648 443,648', 'b26 b27 459,648 510,648',
      'b27 534,648 605,648 c13 c15', 'c1 c2 c3 c4', 'c2 c4 c5 c6', 'c3 c4 c6 c7', 'c4 c6', 'c5 c6 c10', 'c6 c7 c9 c10',
      'c7 c8 c9', 'c9 c10', 'c10 c11', 'c13 c15', 'c14 c15 c16', 'c15 c16 640,648 668,648 685,648', 'c16 746,648 752,648'
    ]);
    draw('bold', ['a1 a7', 'a18 a21', 'a22 a24', 'a24 a28', 'a28 98,648', 'a32 243,648', 'b4 b8', 'b9 b12', 'b28 b24']);
    draw('changed', ['c12 b18 c13', 'b18 c8 c13', 'c9 c8 c11', 'c14 c11 c13']);
    draw('changedBold', ['c12 c8 c9 c11 c14']);
    document.getElementById('marks').setAttribute('d', Object.values(P).map(([x, y]) => `M${x - 4} ${y + 0.5}h8M${x + 0.5} ${y - 4}v8`).join(''));
  </script>
</body>
</html>
